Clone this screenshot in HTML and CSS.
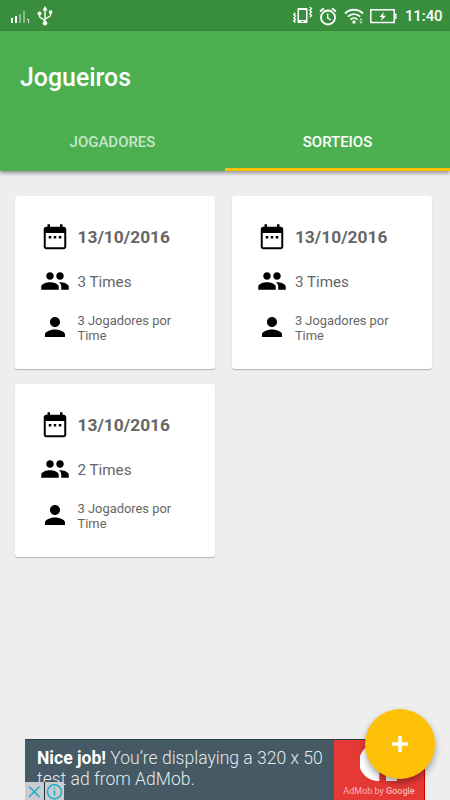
FILE: index.html
```
<!DOCTYPE html>
<html lang="pt-BR">

<head>
  <meta charset="UTF-8">
  <meta name="viewport" content="width=device-width, initial-scale=1.0">
  <title>Jogueiros</title>
  <link rel="stylesheet" href="styles.css">
</head>

<body>
  <!-- icons used more than once -->
  <svg class="sprite" width="0" height="0">
    <symbol id="calendar" viewBox="0 0 24 24">
      <path d="M9 10.400H7v2h2v-2zm4 0h-2v2h2v-2zm4 0h-2v2h2v-2zm2-7.400h-1V1h-2v2H8V1H6v2H5c-1.110 0-2 .9-2 2v14c0 1.100.9 2 2 2h14c1.100 0 2-.9 2-2V5c0-1.100-.9-2-2-2zm.4 16.300H4.600V8h14.800v11.300z"/>
    </symbol>
    <symbol id="people" viewBox="0 0 24 24">
      <path d="M16 11c1.660 0 3-1.340 3-3s-1.340-3-3-3-3 1.340-3 3 1.340 3 3 3zm-8 0c1.660 0 3-1.340 3-3S9.660 5 8 5 5 6.340 5 8s1.340 3 3 3zm0 2c-2.330 0-7 1.170-7 3.500V19h14v-2.500c0-2.330-4.670-3.500-7-3.500zm8 0c-.29 0-.62.02-.97.05 1.160.84 1.970 1.970 1.970 3.450V19h6v-2.500c0-2.330-4.670-3.500-7-3.500z"/>
    </symbol>
    <symbol id="person" viewBox="0 0 24 24">
      <path d="M12 12c2.210 0 4-1.790 4-4s-1.790-4-4-4-4 1.790-4 4 1.790 4 4 4zm0 2c-2.670 0-8 1.340-8 4v2h16v-2c0-2.660-5.330-4-8-4z"/>
    </symbol>
  </svg>

  <div class="status-bar">
    <svg class="signal" width="20" height="13" viewBox="0 0 20 13">
      <path fill="#fff" d="M1 8h2v5H1zM5 6h2v7H5z"/>
      <path fill="#fff" opacity=".4" d="M9 4h2v9H9zM13 1h2v12h-2z"/>
      <path fill="#fff" opacity=".8" d="M17 9h2v4h-1v-3h-1z"/>
    </svg>
    <svg class="usb" width="16" height="20" viewBox="0 0 16 20">
      <g fill="none" stroke="#fff" stroke-width="1.400">
        <path d="M8 3v14M2.500 8v2.500c0 1.500 5.500 2.500 5.500 5M13.500 6v3.500c0 2-5.500 2-5.500 4.500"/>
      </g>
      <path fill="#fff" d="M8 0l2.500 4.500h-5zM12 4.500h3.200v3.200H12z"/>
      <circle cx="2.500" cy="7.500" r="2" fill="#fff"/>
      <circle cx="8" cy="17.300" r="2.200" fill="#fff"/>
    </svg>
    <div class="status-right">
      <svg width="20" height="18" viewBox="0 0 20 18">
        <path fill="#fff" fill-rule="evenodd" d="M5.500 1h8a1 1 0 0 1 1 1v13a1 1 0 0 1-1 1h-8a1 1 0 0 1-1-1V2a1 1 0 0 1 1-1zM6 3v10h7V3zM8.500 14v1h2v-1z"/>
        <path fill="none" stroke="#fff" stroke-width="1.300" d="M2.500 6L.8 7.500l1.700 1.600-1.700 1.700 1.700 1.600-1.700 1.600 1.700 1.500M16.800 0l1.700 1.700-1.700 1.700 1.700 1.700-1.700 1.700 1.700 1.700-1.700 1.700"/>
      </svg>
      <svg width="18" height="19" viewBox="0 0 18 19">
        <g fill="none" stroke="#fff" stroke-width="1.800">
          <circle cx="9" cy="10.500" r="7"/>
          <path d="M1 4.500L5 1.300M17 4.500l-4-3.200"/>
          <path stroke-width="1.400" d="M8.700 6.500v4.500l3.200 2"/>
        </g>
      </svg>
      <svg width="20" height="17" viewBox="0 0 20 17">
        <g fill="none" stroke="#fff" stroke-width="1.800">
          <path d="M1 5.500c5-5 13-5 18 0M3.800 8.700c3.600-3.500 8.800-3.500 12.400 0M6.500 11.600c2-2 5-2 7 0"/>
        </g>
        <circle cx="10" cy="14" r="1.700" fill="#fff"/>
        <path fill="#fff" opacity=".7" d="M17 10l1.700 2.300h-3.400zM17 16l1.700-2.500h-3.400z"/>
      </svg>
      <svg width="27" height="15" viewBox="0 0 27 15">
        <rect x=".8" y=".8" width="23.400" height="12.700" fill="none" stroke="#fff" stroke-width="1.500"/>
        <path fill="#fff" d="M24.500 4.500h2v5.500h-2zM14 3l-4.500 5h2.700l-1.200 4 5-5.200h-3z"/>
      </svg>
      <span class="clock">11:40</span>
    </div>
  </div>

  <header class="app-bar">
    <h1>Jogueiros</h1>
    <nav class="tabs">
      <a class="tab">JOGADORES</a>
      <a class="tab active">SORTEIOS</a>
    </nav>
  </header>

  <main class="cards">
    <div class="card">
      <div class="row date"><svg class="icon"><use href="#calendar"/></svg><b>13/10/2016</b></div>
      <div class="row teams"><svg class="icon"><use href="#people"/></svg><span>3 Times</span></div>
      <div class="row players"><svg class="icon"><use href="#person"/></svg><span>3 Jogadores por Time</span></div>
    </div>
    <div class="card">
      <div class="row date"><svg class="icon"><use href="#calendar"/></svg><b>13/10/2016</b></div>
      <div class="row teams"><svg class="icon"><use href="#people"/></svg><span>3 Times</span></div>
      <div class="row players"><svg class="icon"><use href="#person"/></svg><span>3 Jogadores por Time</span></div>
    </div>
    <div class="card">
      <div class="row date"><svg class="icon"><use href="#calendar"/></svg><b>13/10/2016</b></div>
      <div class="row teams"><svg class="icon"><use href="#people"/></svg><span>2 Times</span></div>
      <div class="row players"><svg class="icon"><use href="#person"/></svg><span>3 Jogadores por Time</span></div>
    </div>
  </main>

  <div class="ad">
    <p class="ad-text"><b>Nice job!</b> You’re displaying a 320 x 50<br>test ad from AdMob.</p>
    <div class="ad-brand">
      <svg width="38" height="38" viewBox="0 0 38 38">
        <path fill="#fff" d="M19.500 38A19 19 0 1 1 37 19v19H26V26h-6.500z"/>
        <path fill="#e53935" d="M19.500 26H26v12h-6.500z"/>
      </svg>
      <span>AdMob by <b>Google</b></span>
    </div>
    <div class="ad-choices">
      <svg width="19" height="18" viewBox="0 0 19 18"><path d="M4 4.500l10.500 10.500M14.500 4.500L4 15"/></svg>
      <svg width="19" height="18" viewBox="0 0 19 18"><circle cx="9.500" cy="9.800" r="7"/><path d="M9.500 8.500v5M9.500 5.500v1.800"/></svg>
    </div>
  </div>

  <button class="fab">
    <svg width="16" height="16" viewBox="0 0 16 16"><path d="M8 0v16M0 8h16"/></svg>
  </button>
</body>

</html>
```
FILE: styles.css
```
* {
  box-sizing: border-box;
}

body {
  margin: 0;
  height: 800px;
  display: flex;
  flex-direction: column;
  position: relative;
  overflow: hidden;
  background-color: #eee;
  font-family: Roboto, sans-serif;
  color: #666;
}

svg {
  display: block;
  flex-shrink: 0;
}

.sprite {
  position: absolute;
}

/* status bar */
.status-bar {
  height: 31px;
  flex-shrink: 0;
  display: flex;
  align-items: center;
  padding: 1px 7.5px 0 10px;
  background-color: #388e3c;
  color: #fff;
}

.usb {
  margin-left: 7px;
}

.status-right {
  margin-left: auto;
  display: flex;
  align-items: center;
  gap: 6.5px;
}

.clock {
  font-size: 15px;
  font-weight: 500;
  letter-spacing: -0.1px;
  margin-left: 1px;
}

/* header */
.app-bar {
  height: 140px;
  flex-shrink: 0;
  display: flex;
  flex-direction: column;
  background-color: #4caf50;
  box-shadow: 0 2px 4px rgba(0, 0, 0, 0.4);
  color: #fff;
}

.app-bar h1 {
  margin: 0;
  padding-left: 20px;
  font-size: 24.9px;
  font-weight: 500;
  line-height: 93px;
  height: 80px;
}

.tabs {
  display: flex;
  flex: 1;
}

.tab {
  flex: 1;
  display: flex;
  align-items: center;
  justify-content: center;
  padding-top: 4px;
  font-size: 15px;
  font-weight: 500;
  letter-spacing: -0.02px;
  color: rgba(255, 255, 255, 0.7);
  border-bottom: 3px solid transparent;
}

.tab.active {
  color: #fff;
  border-color: #ffc107;
}

/* cards */
.cards {
  display: grid;
  grid-template-columns: 200px 200px;
  gap: 15px 17.4px;
  padding: 25px 15px;
}

.card {
  height: 173px;
  padding: 26.5px 25px 0;
  background-color: #fff;
  border-radius: 3px;
  box-shadow: 0 1px 1px rgba(0, 0, 0, 0.25);
}

.row {
  display: flex;
  align-items: center;
  gap: 7.5px;
  height: 30px;
}

.icon {
  width: 30px;
  height: 30px;
  fill: #000;
}

.date {
  font-size: 17.35px;
}

.date b {
  padding-bottom: 2px;
}

.teams {
  margin-top: 13.5px;
  font-size: 15.2px;
}

.teams span {
  padding-top: 2px;
}

.players {
  margin-top: 16px;
  font-size: 12.9px;
  line-height: 15px;
}

.players span {
  width: 100px;
  padding-top: 2px;
}

/* ad banner */
.ad {
  position: absolute;
  left: 25px;
  top: 739px;
  width: 400px;
  height: 61px;
  display: flex;
  background-color: #455a64;
  border-top: 1px solid #263f4a;
}

.ad-text {
  flex: 1;
  margin: 0;
  padding: 8px 0 0 12px;
  font-size: 17.55px;
  font-weight: 300;
  line-height: 21px;
  white-space: nowrap;
  color: #e4eaec;
}

.ad-text b {
  color: #fff;
  font-weight: 700;
}

.ad-brand {
  width: 91px;
  display: flex;
  flex-direction: column;
  align-items: center;
  padding-top: 3px;
  background-color: #e53935;
  border-right: 1px solid #d50000;
  font-size: 9px;
  color: #f7b5b3;
}

.ad-brand span {
  margin-top: 5px;
}

.ad-brand b {
  font-weight: 500;
}

.ad-choices {
  position: absolute;
  left: 0;
  bottom: 0;
  display: flex;
  gap: 1px;
  background-color: #172e42;
}

.ad-choices svg {
  background-color: #ccc;
  fill: none;
  stroke: #1ab0d0;
  stroke-width: 1.6;
}

.fab {
  position: absolute;
  left: 365px;
  top: 709px;
  width: 70px;
  height: 70px;
  display: flex;
  align-items: center;
  justify-content: center;
  padding: 0;
  border: none;
  border-radius: 50%;
  background-color: #ffc107;
  box-shadow: 0 4px 7px rgba(0, 0, 0, 0.35);
}

.fab svg {
  stroke: #fff;
  stroke-width: 3.5;
}
```
